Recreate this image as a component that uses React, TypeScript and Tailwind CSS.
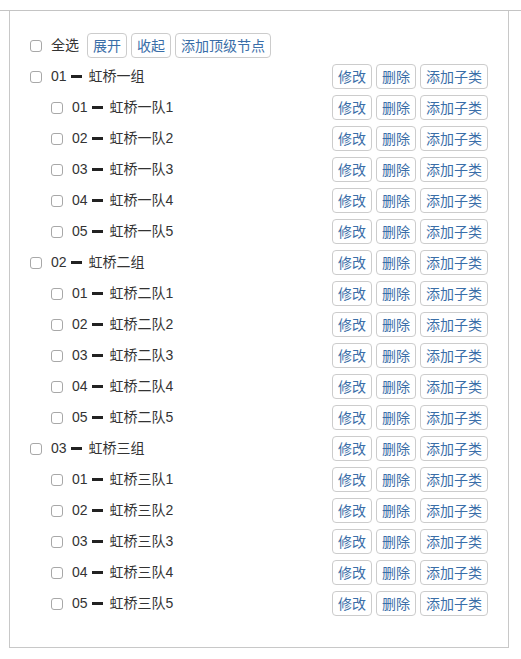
import React from "react";

const groups = [
  { code: "01", name: "虹桥一组", kids: ["虹桥一队1", "虹桥一队2", "虹桥一队3", "虹桥一队4", "虹桥一队5"] },
  { code: "02", name: "虹桥二组", kids: ["虹桥二队1", "虹桥二队2", "虹桥二队3", "虹桥二队4", "虹桥二队5"] },
  { code: "03", name: "虹桥三组", kids: ["虹桥三队1", "虹桥三队2", "虹桥三队3", "虹桥三队4", "虹桥三队5"] },
];

const font = { fontFamily: '"Liberation Sans", "Noto Sans CJK SC", sans-serif' };

function Box() {
  return <span className="inline-block w-[12px] h-[12px] border border-[#a8a8a8] rounded-[3px] bg-white shrink-0" />;
}

function Btn({ children }: { children: React.ReactNode }) {
  return (
    <button className="h-[25px] px-[5px] border border-[#cccccc] rounded-[4px] bg-white text-[14px] leading-none text-[#3a6ea8]">
      {children}
    </button>
  );
}

function Row({ level, code, name }: { level: number; code: string; name: string }) {
  return (
    <div className="flex items-center justify-between h-[25px] mt-[6px]">
      <div className={`flex items-center ${level === 2 ? "pl-[21px]" : ""}`}>
        <Box />
        <span className="ml-[9px] text-[14px] text-[#333333] flex items-center">
          <span>{code}</span>
          <span className="inline-block w-[11px] h-[3px] bg-[#222222] ml-[4px] mr-[7px]" />
          <span>{name}</span>
        </span>
      </div>
      <div className="flex gap-[4px]">
        <Btn>修改</Btn>
        <Btn>删除</Btn>
        <Btn>添加子类</Btn>
      </div>
    </div>
  );
}

export default function App() {
  return (
    <div className="bg-white w-[521px] h-[659px] pt-[10px]" style={font}>
      <div className="border-t border-[#c4c4c4] w-[521px]">
        <div className="ml-[9px] w-[500px] h-[637px] border-l border-r border-b border-[#c8c8c8] pt-[22px] pl-[20px] pr-[20px]">
          <div className="flex items-center h-[25px]">
            <Box />
            <span className="ml-[9px] text-[14px] text-[#333333]">全选</span>
            <div className="flex gap-[4px] ml-[8px]">
              <Btn>展开</Btn>
              <Btn>收起</Btn>
              <Btn>添加顶级节点</Btn>
            </div>
          </div>
          {groups.map((g) => (
            <React.Fragment key={g.code}>
              <Row level={1} code={g.code} name={g.name} />
              {g.kids.map((k, i) => (
                <Row key={k} level={2} code={`0${i + 1}`} name={k} />
              ))}
            </React.Fragment>
          ))}
        </div>
      </div>
    </div>
  );
}
